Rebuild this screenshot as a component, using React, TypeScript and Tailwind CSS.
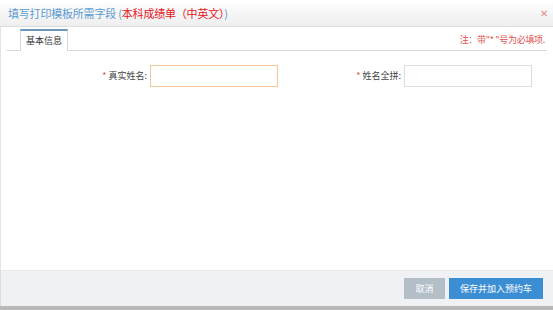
import React from "react";

export default function App() {
  const font = { fontFamily: '"Noto Sans CJK SC", "Liberation Sans", sans-serif' };
  return (
    <div className="w-[553px] h-[310px] flex flex-col bg-white overflow-hidden" style={font}>
      <div className="h-[27px] shrink-0 flex items-center justify-between pl-[8px] pr-[5px] bg-gradient-to-b from-[#ffffff] to-[#eeeeee] border-b border-[#dedede]">
        <div className="text-[11px] leading-none text-[#5b9bd1] tracking-[-0.2px]">
          填写打印模板所需字段 (<span className="text-[#e4141b]">本科成绩单（中英文）</span>)
        </div>
        <div className="text-[10px] leading-none text-[#e88a8a]">✕</div>
      </div>
      <div className="flex-1 flex flex-col border-l border-[#e4e4e4]">
        <div className="mt-px mx-[6px] h-[23px] flex items-end justify-between border-b border-[#d6d6d6]">
          <div className="ml-[13px] w-[48px] h-[22px] -mb-px bg-white border-t-2 border-t-[#6d96b8] border-x border-x-[#d6d6d6] flex items-center justify-center text-[9px] text-[#333]">
            基本信息
          </div>
          <div className="mb-[6px] mr-[2px] text-[9px] leading-none text-[#e05050] tracking-[-0.3px]">注：带"* "号为必填项.</div>
        </div>
        <div className="mt-[14px] flex items-center">
          <div className="w-[149px] text-right pr-[3px] text-[9px] text-[#444]">
            <span className="text-[#e05050]">*</span> 真实姓名:
          </div>
          <div className="w-[128px] h-[22px] border border-[#f4c899] bg-white"></div>
          <div className="w-[126px] text-right pr-[3px] text-[9px] text-[#444]">
            <span className="text-[#e05050]">*</span> 姓名全拼:
          </div>
          <div className="w-[128px] h-[22px] border border-[#dcdcdc] bg-white"></div>
        </div>
      </div>
      <div className="h-[36px] shrink-0 bg-[#f0f1f5] border-t border-[#e6e7ea] border-l border-l-[#dcdcdc] flex items-center justify-end pr-[10px] gap-[4px]">
        <div className="w-[41px] h-[21px] bg-[#b3bec7] text-white text-[9px] flex items-center justify-center">取消</div>
        <div className="w-[94px] h-[21px] bg-[#3b8ed4] text-white text-[9px] flex items-center justify-center">保存并加入预约车</div>
      </div>
      <div className="h-[4px] shrink-0 bg-[#b8b8b8]"></div>
    </div>
  );
}
